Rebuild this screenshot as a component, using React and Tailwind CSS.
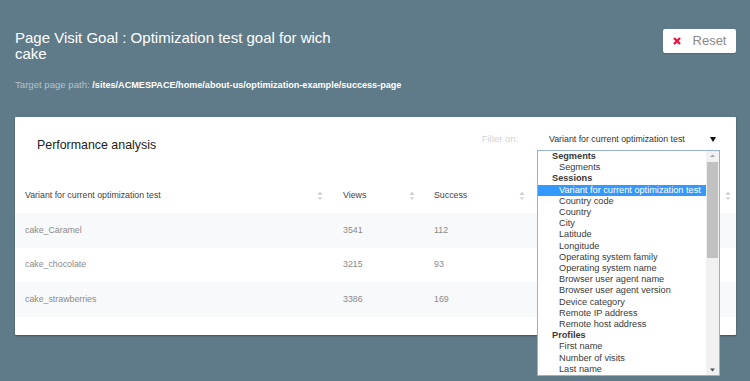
import { } from "react";

const rows = [
  { name: "cake_Caramel", views: 3541, success: 112 },
  { name: "cake_chocolate", views: 3215, success: 93 },
  { name: "cake_strawberries", views: 3386, success: 169 }
];

const options = [
  { group: "Segments", items: ["Segments"] },
  {
    group: "Sessions",
    items: [
      "Variant for current optimization test",
      "Country code",
      "Country",
      "City",
      "Latitude",
      "Longitude",
      "Operating system family",
      "Operating system name",
      "Browser user agent name",
      "Browser user agent version",
      "Device category",
      "Remote IP address",
      "Remote host address"
    ]
  },
  { group: "Profiles", items: ["First name", "Number of visits", "Last name"] }
];

const selected = "Variant for current optimization test";

function SortIcon() {
  return (
    <svg width="6" height="10" viewBox="0 0 6 10" className="shrink-0">
      <path d="M0.5 4 L3 0.5 L5.5 4 Z" fill="#cfcfcf" />
      <path d="M0.5 6 L5.5 6 L3 9.5 Z" fill="#dcdcdc" />
    </svg>
  );
}

function HeaderCell({ label, className = "" }) {
  return (
    <th className={`h-[35px] pl-[10px] text-left font-normal ${className}`}>
      <div className="flex items-center justify-between">
        <span>{label}</span>
        <SortIcon />
      </div>
    </th>
  );
}

function FilterList() {
  return (
    <div className="absolute left-0 top-[16px] z-10 flex h-[226px] w-[183px] border border-[#94b0d8] bg-white">
      <ul className="flex-1 overflow-hidden text-[9.2px] leading-[11.2px] text-[#3a3a3a]">
        {options.map((opt) => (
          <li key={opt.group}>
            <div className="pl-[14px] font-bold">{opt.group}</div>
            {opt.items.map((item) => (
              <div key={item} className={`pl-[21px] ${item === selected ? "bg-[#3399ff] text-white" : ""}`}>{item}</div>
            ))}
          </li>
        ))}
      </ul>
      <div className="flex w-[13px] flex-col items-center bg-[#f1f1f1]">
        <svg width="7" height="10" viewBox="0 0 7 10"><path d="M1 6 L3.5 3.5 L6 6 Z" fill="#a3a3a3" /></svg>
        <div className="mt-[1px] h-[96px] w-[11px] bg-[#c1c1c1]" />
        <div className="flex-1" />
        <svg width="7" height="10" viewBox="0 0 7 10"><path d="M1 3.5 L6 3.5 L3.5 6.5 Z" fill="#505050" /></svg>
      </div>
    </div>
  );
}

export default function App() {
  return (
    <div className="min-h-[381px] bg-[#5f7b89] pb-[46px] pl-[15px] pr-[14px] pt-[30px] font-['Liberation_Sans',Arial,sans-serif]">
      <div className="flex items-start justify-between">
        <h1 className="w-[330px] text-[15px] leading-[16px] text-white">Page Visit Goal : Optimization test goal for wich cake</h1>
        <button className="-mt-[1px] flex h-[24px] w-[73px] items-center justify-center gap-[12px] rounded-[2px] bg-white text-[13px] text-[#8a8a8a] shadow-[0_1px_1px_rgba(0,0,0,0.15)]">
          <svg width="8" height="8" viewBox="0 0 8 8"><path d="M1 1 L7 7 M7 1 L1 7" stroke="#e8163f" strokeWidth="2.4" /></svg>
          Reset
        </button>
      </div>
      <p className="mt-[17px] text-[9.6px] leading-[12px] text-[#b4c2ca]">
        Target page path: <b className="text-[9.1px] text-white">/sites/ACMESPACE/home/about-us/optimization-example/success-page</b>
      </p>

      <section className="mt-[26px] rounded-[1px] bg-white pb-[18px] shadow-[0_1px_2px_rgba(0,0,0,0.35)]">
        <div className="flex h-[61px] items-start justify-between pl-[22px] pr-[16px]">
          <h2 className="mt-[19px] text-[12.4px] text-[#222]">Performance analysis</h2>
          <div className="mt-[16px] flex items-center">
            <span className="mr-[19px] text-[9.3px] text-[#cfd4d8]">Filter on:</span>
            <div className="relative w-[183px]">
              <div className="flex h-[12px] items-center justify-between pl-[12px] pr-[4px] text-[8.8px] text-[#333]">
                <span>{selected}</span>
                <svg width="6" height="5" viewBox="0 0 6 5"><path d="M0 0 L6 0 L3 5 Z" fill="#111" /></svg>
              </div>
              <FilterList />
            </div>
          </div>
        </div>

        <table className="w-full table-fixed text-[8.8px]">
          <colgroup>
            <col className="w-[318px]" />
            <col className="w-[91px]" />
            <col className="w-[110px]" />
            <col />
          </colgroup>
          <thead className="text-[#444]">
            <tr>
              <HeaderCell label="Variant for current optimization test" className="pr-[10px]" />
              <HeaderCell label="Views" className="pr-[9px]" />
              <HeaderCell label="Success" className="pr-[9px]" />
              <HeaderCell label="" className="pr-[5px]" />
            </tr>
          </thead>
          <tbody className="text-[#8a8a8a]">
            {rows.map((row, i) => (
              <tr key={row.name} className={i % 2 === 0 ? "bg-[#f8f9fa]" : "bg-white"}>
                <td className="h-[34.5px] pl-[10px]">{row.name}</td>
                <td className="pl-[10px]">{row.views}</td>
                <td className="pl-[10px]">{row.success}</td>
                <td />
              </tr>
            ))}
          </tbody>
        </table>
      </section>
    </div>
  );
}
